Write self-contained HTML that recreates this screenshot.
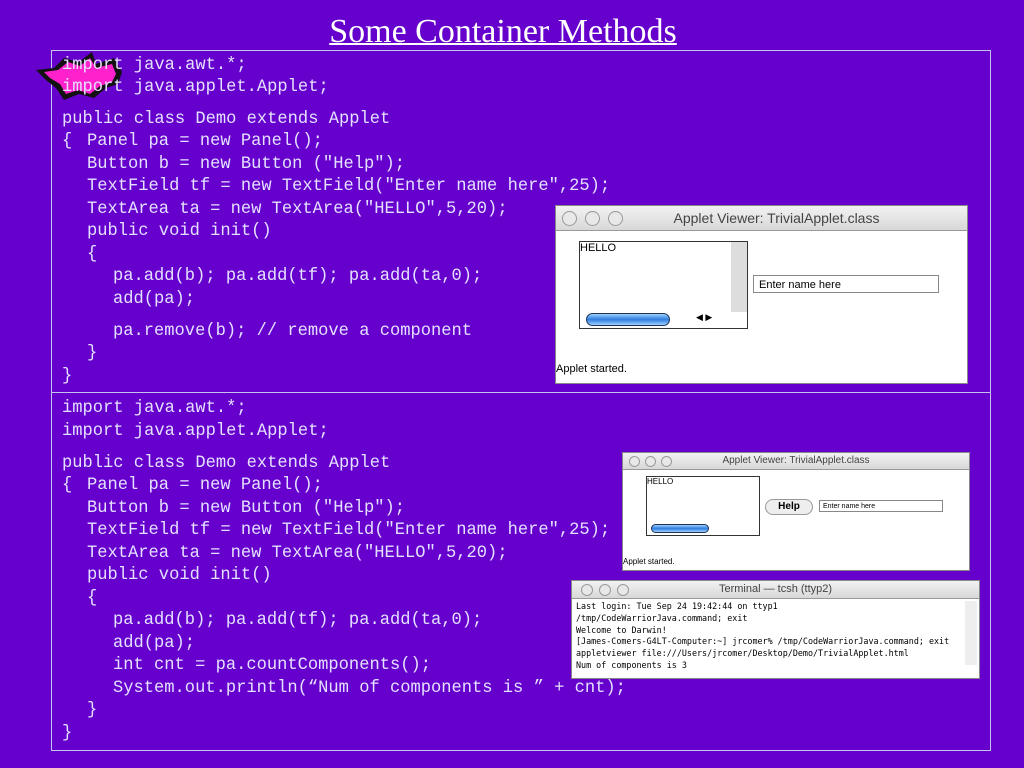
<!DOCTYPE html>
<html><head><style>
body{margin:0;width:1024px;height:768px;background:#6600cc;position:relative;overflow:hidden;font-family:"Liberation Serif",serif}
.t{position:absolute;left:0;width:1006px;text-align:center;top:13px;font-size:34px;color:#fff;text-decoration:underline;text-decoration-thickness:2px}
.box{position:absolute;left:51px;width:938px;border:1px solid #c8c0ee}
.l{position:absolute;font-family:"Liberation Mono",monospace;font-size:17.1px;color:#e4e0ff;white-space:pre;line-height:20px;height:20px;margin-top:1px}
.a{left:62px}.b{left:87px}.c{left:113px}
.win{position:absolute;background:#fff;border:1px solid #888;font-family:"Liberation Sans",sans-serif;color:#000}
.bar{position:absolute;left:0;right:0;top:0;background:linear-gradient(#f2f2f2,#d8d8d8);border-bottom:1px solid #999;color:#444;text-align:center}
.dot{position:absolute;border:1px solid #999;border-radius:50%;background:#e8e8e8}
.ta{position:absolute;border:1px solid #333;background:#fff}
.pill{position:absolute;border-radius:8px;background:linear-gradient(#9cd0ff,#2f7de0,#9cd0ff);border:1px solid #235}
</style></head><body>
<div class="t">Some Container Methods</div>
<div class="box" style="top:50px;height:341px"></div>
<div class="box" style="top:392px;height:357px"></div>
<svg style="position:absolute;left:34px;top:50px" width="95" height="52" viewBox="0 0 95 52"><path d="M2 20 L20 18 L30 8 L45 12 L58 2 L62 14 L80 8 L88 22 L84 34 L72 38 L60 48 L45 44 L30 50 L22 38 L12 30 Z" fill="#111"/><path d="M10 22 L24 20 L34 12 L46 16 L56 8 L62 18 L78 14 L82 24 L78 32 L66 36 L56 44 L44 40 L32 44 L26 34 L16 28 Z" fill="#ff22cc"/></svg>
<div class="l a" style="top:55px">import java.awt.*;</div>
<div class="l a" style="top:77px">import java.applet.Applet;</div>
<div class="l a" style="top:109px">public class Demo extends Applet</div>
<div class="l a" style="top:131px">{</div><div class="l b" style="top:131px">Panel pa = new Panel();</div>
<div class="l b" style="top:154px">Button b = new Button ("Help");</div>
<div class="l b" style="top:176px">TextField tf = new TextField("Enter name here",25);</div>
<div class="l b" style="top:199px">TextArea ta = new TextArea("HELLO",5,20);</div>
<div class="l b" style="top:221px">public void init()</div>
<div class="l b" style="top:244px">{</div>
<div class="l c" style="top:266px">pa.add(b); pa.add(tf); pa.add(ta,0);</div>
<div class="l c" style="top:289px">add(pa);</div>
<div class="l c" style="top:321px">pa.remove(b); // remove a component</div>
<div class="l b" style="top:343px">}</div>
<div class="l a" style="top:366px">}</div>

<div class="l a" style="top:398px">import java.awt.*;</div>
<div class="l a" style="top:421px">import java.applet.Applet;</div>
<div class="l a" style="top:453px">public class Demo extends Applet</div>
<div class="l a" style="top:475px">{</div><div class="l b" style="top:475px">Panel pa = new Panel();</div>
<div class="l b" style="top:498px">Button b = new Button ("Help");</div>
<div class="l b" style="top:520px">TextField tf = new TextField("Enter name here",25);</div>
<div class="l b" style="top:543px">TextArea ta = new TextArea("HELLO",5,20);</div>
<div class="l b" style="top:565px">public void init()</div>
<div class="l b" style="top:588px">{</div>
<div class="l c" style="top:610px">pa.add(b); pa.add(tf); pa.add(ta,0);</div>
<div class="l c" style="top:633px">add(pa);</div>
<div class="l c" style="top:655px">int cnt = pa.countComponents();</div>
<div class="l c" style="top:678px">System.out.println(“Num of components is ” + cnt);</div>
<div class="l b" style="top:700px">}</div>
<div class="l a" style="top:723px">}</div>

<div class="win" style="left:555px;top:205px;width:411px;height:177px">
<div class="bar" style="height:24px;line-height:24px;font-size:14px;padding-left:30px">Applet Viewer: TrivialApplet.class</div>
<div class="dot" style="left:6px;top:5px;width:13px;height:13px"></div><div class="dot" style="left:29px;top:5px;width:13px;height:13px"></div><div class="dot" style="left:52px;top:5px;width:13px;height:13px"></div>
<div class="ta" style="left:23px;top:35px;width:167px;height:86px;font-size:11px">HELLO<div style="position:absolute;right:0;top:0;width:16px;height:70px;background:#ddd"></div><div class="pill" style="left:6px;top:71px;width:82px;height:11px"></div><div style="position:absolute;left:116px;top:70px;font-size:9px">◀ ▶</div></div>
<div style="position:absolute;left:197px;top:69px;width:186px;height:18px;border:1px solid #888;font-size:11px;line-height:18px;padding-left:5px;box-sizing:border-box">Enter name here</div>
<div style="position:absolute;left:0;top:157px;font-size:11px">Applet started.</div>
</div>

<div class="win" style="left:622px;top:452px;width:346px;height:117px">
<div class="bar" style="height:16px;line-height:16px;font-size:10px">Applet Viewer: TrivialApplet.class</div>
<div class="dot" style="left:6px;top:3px;width:9px;height:9px"></div><div class="dot" style="left:22px;top:3px;width:9px;height:9px"></div><div class="dot" style="left:38px;top:3px;width:9px;height:9px"></div>
<div class="ta" style="left:23px;top:23px;width:112px;height:58px;font-size:8px">HELLO<div class="pill" style="left:4px;top:47px;width:56px;height:7px"></div></div>
<div style="position:absolute;left:142px;top:46px;width:46px;height:14px;border:1px solid #999;border-radius:8px;background:#eee;font-size:10px;font-weight:bold;text-align:center;line-height:14px">Help</div>
<div style="position:absolute;left:196px;top:47px;width:124px;height:12px;border:1px solid #888;font-size:7px;line-height:12px;padding-left:3px;box-sizing:border-box">Enter name here</div>
<div style="position:absolute;left:0;top:104px;font-size:8px">Applet started.</div>
</div>

<div class="win" style="left:571px;top:580px;width:407px;height:97px;overflow:hidden">
<div class="bar" style="height:17px;line-height:17px;font-size:11px">Terminal — tcsh (ttyp2)</div>
<div class="dot" style="left:9px;top:3px;width:10px;height:10px"></div><div class="dot" style="left:27px;top:3px;width:10px;height:10px"></div><div class="dot" style="left:45px;top:3px;width:10px;height:10px"></div>
<div style="position:absolute;left:4px;top:20px;font-size:8.4px;line-height:11.8px;font-family:'DejaVu Sans Mono',monospace;white-space:pre">Last login: Tue Sep 24 19:42:44 on ttyp1
/tmp/CodeWarriorJava.command; exit
Welcome to Darwin!
[James-Comers-G4LT-Computer:~] jrcomer% /tmp/CodeWarriorJava.command; exit
appletviewer file:///Users/jrcomer/Desktop/Demo/TrivialApplet.html
Num of components is 3</div>
<div style="position:absolute;right:2px;top:20px;width:12px;height:64px;background:#eee"></div>
</div>
</body></html>
